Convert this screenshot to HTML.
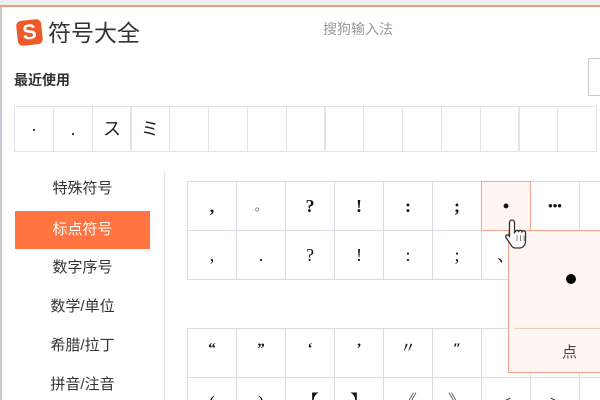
<!DOCTYPE html>
<html><head><meta charset="utf-8"><style>
*{margin:0;padding:0;box-sizing:border-box}
html,body{width:600px;height:400px;overflow:hidden}
body{background:#fff;position:relative;font-family:"Liberation Sans","Noto Sans CJK SC",sans-serif;color:#333}
#w{position:absolute;left:0;top:0;width:600px;height:400px;overflow:hidden}
.a{position:absolute}
.c{position:absolute;width:50px;height:50px;border:1px solid #d9dde3;text-align:center;line-height:48px;font-family:"Liberation Serif","Noto Serif CJK SC",serif;font-size:18px;color:#111;overflow:hidden}
.rc{position:absolute;top:106px;width:40px;height:46px;border:1px solid #e1e4e8;text-align:center;line-height:44px;font-size:18px;color:#222}
.s{position:absolute;left:15px;width:135px;height:38px;line-height:38px;text-align:center;font-size:15px;color:#333}
</style></head><body><div id="w">
<div class="a" style="left:0;top:0;width:600px;height:5px;background:#eef0f3"></div>
<div class="a" style="left:0;top:5px;width:600px;height:2px;background:#f39a7c"></div>
<div class="a" style="left:0;top:7px;width:2px;height:393px;background:#c8ccd2"></div>
<div class="a" style="left:17px;top:20px;width:25px;height:25px;background:#ec5a2a;border-radius:5px;transform:rotate(-6deg);color:#fff;font-weight:bold;font-size:21px;line-height:25px;text-align:center">S</div>
<div class="a" style="left:48px;top:17px;font-size:23px;color:#333;line-height:32px">符号大全</div>
<div class="a" style="left:323px;top:19px;font-size:14px;color:#999">搜狗输入法</div>
<div class="a" style="left:14px;top:70px;font-size:14px;font-weight:bold;color:#333">最近使用</div>
<div class="a" style="left:588px;top:58px;width:14px;height:38px;border:1px solid #c8ccd2;border-right:none"></div>
<div id="rec"></div>
<div class="a" style="left:164px;top:172px;width:1px;height:228px;background:#dde0e4"></div>
<div class="s" style="top:170px">特殊符号</div>
<div class="s" style="top:211px;background:#ff7440;color:#fff">标点符号</div>
<div class="s" style="top:249px">数字序号</div>
<div class="s" style="top:288px">数学/单位</div>
<div class="s" style="top:327px">希腊/拉丁</div>
<div class="s" style="top:366px">拼音/注音</div>
<div id="grid"></div>
<div class="a" style="left:508px;top:230px;width:100px;height:143px;background:#fff6f3;border:1px solid #f5a58a"></div>
<div class="a" style="left:515px;top:328px;width:90px;height:1px;background:#f3c9b9"></div>
<div class="a" style="left:566px;top:274px;width:10px;height:10px;border-radius:50%;background:#000"></div>
<div class="a" style="left:562px;top:341px;font-size:15px;color:#444">点</div>
<svg class="a" style="left:504px;top:218px;z-index:9" width="28" height="32" viewBox="0 0 28 32"><path d="M8 2c1.5 0 2.5 1 2.5 2.5v10l1-1c.5-1.5 3-1.5 3 .5l.5-1c.7-1.2 3-1 3 .8l.5-.5c.8-1 3-.5 3 1.2V23c0 4-2.5 7-6 7h-4c-2.5 0-3.5-1-4.5-3L2 19.5c-1-2 1.2-3.5 3-2L5.5 19V4.5C5.5 3 6.5 2 8 2z" fill="#fff" stroke="#333" stroke-width="1.3"/><path d="M13 17v6M16.5 17v6M20 17.5v5.5" stroke="#888" stroke-width="1"/></svg>
</div>
<script>
var r=document.getElementById('rec'),h='',sy=['·','.','ス','ミ'];
for(var i=0;i<15;i++)h+='<div class="rc" style="left:'+(14+Math.round(i*38.8))+'px">'+(sy[i]||'')+'</div>';
r.innerHTML=h;
var rows=[[181,[',','。','?','!',':',';','•','•••','‘'],1],[230,[',','.','?','!',':',';','、','',''],0],[328,['“','”','‘','’','〃','″','','',''],1],[377,['(',')','【','】','《','》','<','>',''],0]];
h='';
rows.forEach(function(rw){rw[1].forEach(function(t,i){
var st='left:'+(187+i*49)+'px;top:'+rw[0]+'px;';
if(rw[0]==181&&i==6)st+='background:#fff6f3;border-color:#f5a58a;z-index:1;';
if(rw[2])st+='font-weight:bold;';
if(t=='•••')st+='font-size:13px;';
if(t=='。')st+='font-size:12px;';
if(rw[0]==328)st+='font-size:15px;line-height:40px;';
if(rw[0]==377)st+='height:23px;border-bottom:none;';
h+='<div class="c" style="'+st+'">'+t.replace('<','&lt;').replace('>','&gt;')+'</div>';});});
document.getElementById('grid').innerHTML=h;
</script>
</body></html>
